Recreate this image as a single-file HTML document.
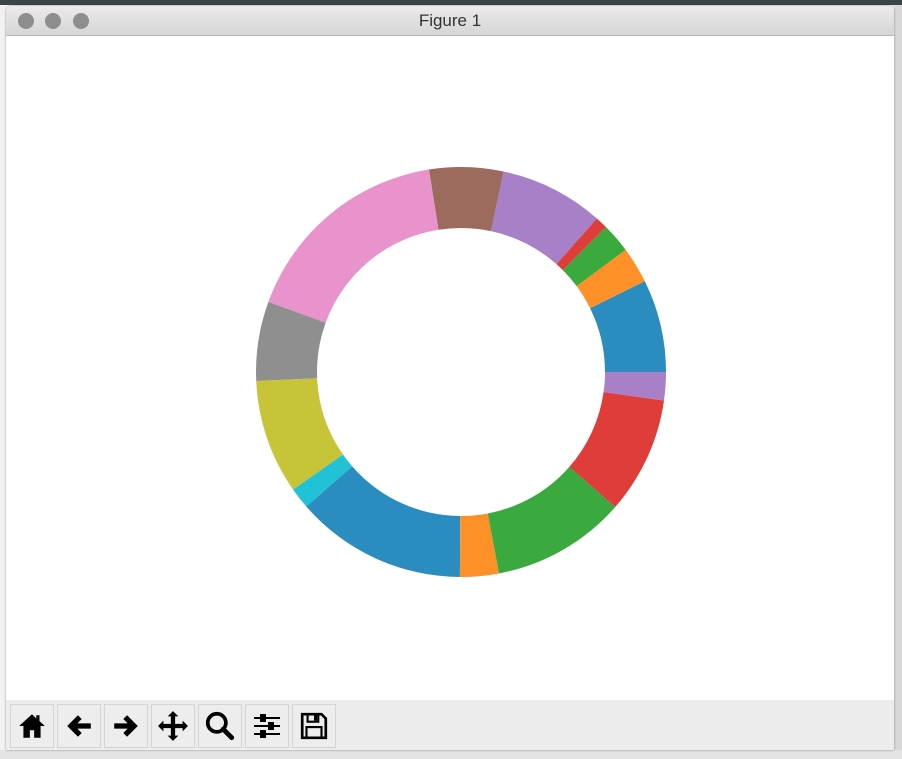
<!DOCTYPE html>
<html><head><meta charset="utf-8"><style>
html,body{margin:0;padding:0;width:902px;height:759px;overflow:hidden;background:#ececec;font-family:"Liberation Sans",sans-serif}
#top{position:absolute;left:0;top:0;width:902px;height:5px;background:#3b4447}
#left{position:absolute;left:0;top:5px;width:8px;height:754px;background:#f2f2f2}
#right{position:absolute;left:894px;top:5px;width:8px;height:754px;background:#d8d8d8}
#bottom{position:absolute;left:0;top:750px;width:902px;height:9px;background:#e4e4e4}
#win{position:absolute;left:6px;top:6px;width:888px;height:744px;background:#fff;border-radius:5px 5px 0 0;overflow:hidden;box-shadow:0 0 2px rgba(0,0,0,.4)}
#title{height:29px;background:linear-gradient(#ebebeb,#d6d6d6);border-bottom:1px solid #b8b8b8;text-align:center;font-size:17px;line-height:30px;color:#333;position:relative}
.dot{position:absolute;top:7px;width:16px;height:16px;border-radius:50%;background:#8e8e8e}
#tb{position:absolute;left:0;top:694px;width:888px;height:50px;background:#ececec}
.b{position:absolute;top:4px;width:44px;height:44px;border:1px solid #d4d4d4;background:#ededed;box-sizing:border-box;display:flex;align-items:center;justify-content:center}
</style></head><body>
<div id="top"></div><div id="left"></div><div id="right"></div><div id="bottom"></div>
<div id="win">
<div id="title"><div class="dot" style="left:12px"></div><div class="dot" style="left:39px"></div><div class="dot" style="left:67px"></div>Figure 1</div>
<svg id="pie" width="888" height="664" style="position:absolute;left:0;top:30px"></svg>
<div id="tb">
<div class="b" style="left:4px"><svg width="30" height="30" viewBox="0 0 28 28"><path d="M14 3 L2 14 H6 V25 H12 V18 H16 V25 H22 V14 H26 L21 9.5 V4 H18 V7 Z" fill="#000"/></svg></div>
<div class="b" style="left:51px"><svg width="30" height="30" viewBox="0 0 28 28"><path d="M3 14 L13 4 L16.5 7.5 L12.5 11.5 H25 V16.5 H12.5 L16.5 20.5 L13 24 Z" fill="#000"/></svg></div>
<div class="b" style="left:98px"><svg width="30" height="30" viewBox="0 0 28 28"><path d="M25 14 L15 4 L11.5 7.5 L15.5 11.5 H3 V16.5 H15.5 L11.5 20.5 L15 24 Z" fill="#000"/></svg></div>
<div class="b" style="left:145px"><svg width="32" height="32" viewBox="0 0 30 30"><path d="M15 1 L20 6 H17 V13 H24 V10 L29 15 L24 20 V17 H17 V24 H20 L15 29 L10 24 H13 V17 H6 V20 L1 15 L6 10 V13 H13 V6 H10 Z" fill="#000"/></svg></div>
<div class="b" style="left:192px"><svg width="32" height="32" viewBox="0 0 30 30"><circle cx="12" cy="12" r="8.5" fill="none" stroke="#000" stroke-width="3.5"/><path d="M18 18 L26 26" stroke="#000" stroke-width="4.5" stroke-linecap="round"/></svg></div>
<div class="b" style="left:239px"><svg width="30" height="30" viewBox="0 0 30 30"><g stroke="#000" stroke-width="2"><path d="M2 7H28M2 15H28M2 23H28"/></g><rect x="8" y="3" width="6" height="8" fill="#000"/><rect x="16" y="11" width="6" height="8" fill="#000"/><rect x="8" y="19" width="6" height="8" fill="#000"/></svg></div>
<div class="b" style="left:286px"><svg width="30" height="30" viewBox="0 0 28 28"><path d="M3 3 H21 L25 7 V25 H3 Z" fill="none" stroke="#000" stroke-width="2.5"/><rect x="8" y="3" width="10" height="7" fill="none" stroke="#000" stroke-width="2"/><rect x="14" y="4" width="3" height="5" fill="#000"/><rect x="7" y="15" width="14" height="10" fill="none" stroke="#000" stroke-width="2"/></svg></div>
</div>
</div>
<script>
var cx=455,cy=336,R=205,r=144;
var b=[0,26.3,36.6,45,48.5,78,99,160,182.5,215,221,269.7,280.7,318.8,352,360];
var c=["#2b8cc0","#fd9128","#3aa93e","#de3d3a","#a880c8","#9d6a5e","#e893cc","#8f8f8f","#c8c43a","#22c2d6"];
var s="";
function p(a,rad){a=a*Math.PI/180;return (cx+rad*Math.cos(a)).toFixed(2)+" "+(cy-rad*Math.sin(a)).toFixed(2);}
for(var i=0;i<15;i++){var a0=b[i],a1=b[i+1],l=(a1-a0)>180?1:0;
s+='<path fill="'+c[i%10]+'" d="M'+p(a0,R)+' A'+R+' '+R+' 0 '+l+' 0 '+p(a1,R)+' L'+p(a1,r)+' A'+r+' '+r+' 0 '+l+' 1 '+p(a0,r)+' Z"/>';}
document.getElementById("pie").innerHTML=s;
</script>
</body></html>
